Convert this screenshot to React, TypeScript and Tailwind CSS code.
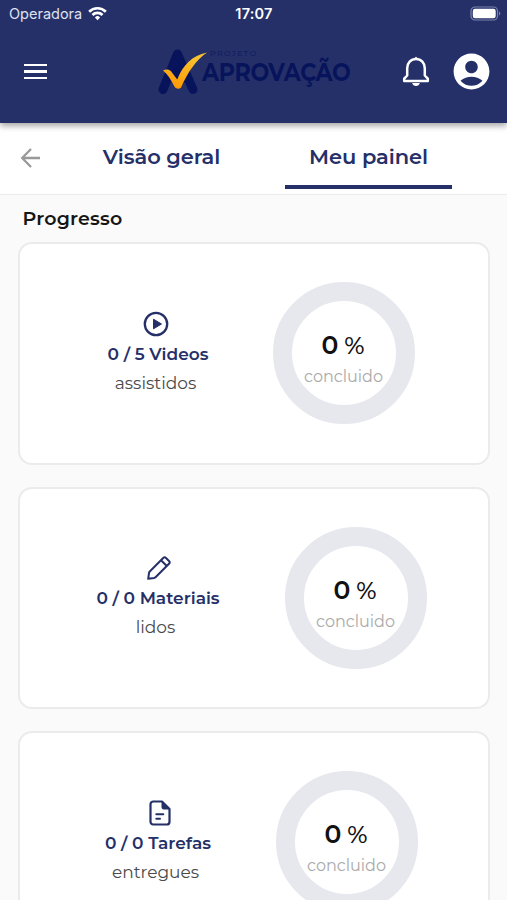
import { useState, type ReactNode } from "react";
import { MdAccountCircle } from "react-icons/md";

type ProgressItem = {
  id: string;
  icon: ReactNode;
  iconClass: string;
  title: string;
  subtitle: string;
  ringClass: string;
  percent: number;
};

const PlayIcon = () => (
  <svg viewBox="0 0 26 26" className="size-[26px]" fill="none">
    <circle cx="13" cy="13" r="11.2" stroke="currentColor" strokeWidth="2.3" />
    <path d="M10.5 8.2 18.5 13l-8 4.8Z" fill="currentColor" stroke="currentColor" strokeLinejoin="round" />
  </svg>
);

const PencilIcon = () => (
  <svg viewBox="0 0 26 26" className="size-[26px]" fill="none" stroke="currentColor" strokeWidth="2" strokeLinejoin="round">
    <path d="M2.2 23.8 3 18Q3.2 17 4 16.2L17.2 3Q18.6 1.6 20 3L23 6Q24.4 7.4 23 8.8L9.8 22Q9 22.8 8 23Z" />
    <path d="m15 5.2 5.8 5.8" />
  </svg>
);

const FileIcon = () => (
  <svg viewBox="0 0 22 26" className="h-[26px] w-[22px]" fill="none" stroke="currentColor" strokeWidth="2.2" strokeLinecap="round" strokeLinejoin="round">
    <path d="M4.3 1.5H13L20.5 9v12.7a2.8 2.8 0 0 1-2.8 2.8H4.3a2.8 2.8 0 0 1-2.8-2.8V4.3a2.8 2.8 0 0 1 2.8-2.8Z" />
    <path d="M13 1.8V7.5a1.5 1.5 0 0 0 1.5 1.5h6Z" fill="currentColor" strokeWidth="1" />
    <path d="M7.3 14.3h7M7.3 18.7H11" strokeWidth="2" />
  </svg>
);

const items: ProgressItem[] = [
  {
    id: "videos",
    icon: <PlayIcon />,
    iconClass: "",
    title: "0 / 5 Videos",
    subtitle: "assistidos",
    ringClass: "ml-[55px]",
    percent: 0,
  },
  {
    id: "materiais",
    icon: <PencilIcon />,
    iconClass: "pl-1.5",
    title: "0 / 0 Materiais",
    subtitle: "lidos",
    ringClass: "ml-[67px]",
    percent: 0,
  },
  {
    id: "tarefas",
    icon: <FileIcon />,
    iconClass: "pl-2",
    title: "0 / 0 Tarefas",
    subtitle: "entregues",
    ringClass: "ml-[58px]",
    percent: 0,
  },
];

const StatusBar = () => (
  <div className="grid h-7 grid-cols-3 items-center pl-[9px] pr-[6px] font-['Inter',sans-serif] text-[14.5px] text-white">
    <div className="flex items-center gap-[6px]">
      <span className="text-[#dfe2f0]">Operadora</span>
      <svg viewBox="0 0 20 15" className="-mt-[2px] h-[15px] w-[19px]" fill="none" stroke="currentColor" strokeWidth="2.8">
        <path d="M1.2 5.6a12.5 12.5 0 0 1 17.6 0" />
        <path d="M4.7 9.1a7.5 7.5 0 0 1 10.6 0" />
        <path d="m10 14.5-2.7-2.9a3.8 3.8 0 0 1 5.4 0Z" fill="currentColor" stroke="none" />
      </svg>
    </div>
    <span className="pr-[2px] text-center font-semibold tracking-[0.2px]">17:07</span>
    <svg viewBox="0 0 31 15" className="h-[15px] w-[31px] justify-self-end -mt-[1px]">
      <rect x="1" y="1" width="26.5" height="13" rx="4" fill="none" stroke="#7c83ab" strokeWidth="1.2" />
      <rect x="2.8" y="2.8" width="22.9" height="9.4" rx="2.2" fill="white" />
      <path d="M29 5.5c1.8.8 1.8 3.2 0 4Z" fill="#7c83ab" />
    </svg>
  </div>
);

const Logo = () => (
  <div className="flex h-12 w-[193px]">
    <svg viewBox="0 0 50 48" className="h-12 w-[50px] shrink-0">
      <defs>
        <linearGradient id="check" x1="0" y1="1" x2="0.3" y2="0">
          <stop offset="0" stopColor="#ff9500" />
          <stop offset="1" stopColor="#f8c330" />
        </linearGradient>
      </defs>
      <path d="M5 41.5 19.5 6 35 41.5" fill="none" stroke="#07145c" strokeWidth="9" strokeLinecap="round" strokeLinejoin="round" />
      <path d="M12 12h15l4 19-10 8-10-12Z" fill="#07145c" />
      <path d="M5 22.5c3-1.4 6-1.3 8 .7l6.2 8.2C25 17 34 7.7 49 4.5 38 12 30 24 23.5 38.5c-.8 2.8-5.5 3.1-7.1.1C13 32 10 26.5 5 22.5Z" fill="url(#check)" />
    </svg>
    <div className="-ml-[6px] text-[#07145c]">
      <div className="pl-[8px] text-[8px] font-medium leading-[10px] tracking-[1.2px] text-[#121e62]">PROJETO</div>
      <div className="origin-left scale-x-[0.89] whitespace-nowrap pt-[2px] text-[25px] font-bold leading-[25px] tracking-[-0.4px]">
        APROVAÇÃO
      </div>
    </div>
  </div>
);

const Header = () => (
  <header className="relative z-10 h-[123px] shrink-0 bg-[#253068] shadow-[0_3px_6px_rgba(0,0,0,0.35)]">
    <StatusBar />
    <div className="flex h-[87px] items-center pl-6 pr-[14px] text-white">
      <button aria-label="Menu" className="flex w-[23px] flex-col gap-1">
        <span className="h-[2.3px] bg-white" />
        <span className="h-[2.3px] bg-white" />
        <span className="h-[2.3px] bg-white" />
      </button>
      <div className="ml-[111px]">
        <Logo />
      </div>
      <button aria-label="Notificações" className="ml-[51px]">
        <svg viewBox="0 0 28 32" className="h-8 w-7" fill="none" stroke="currentColor" strokeWidth="2.5" strokeLinejoin="round">
          <path d="M5.2 19.5v-7.2C5.2 7 8.8 3 14 3s8.8 4 8.8 9.3v7.2l3 3.2v2.3H2.2v-2.3Z" />
          <path d="M10.2 27h7.6c-.4 1.8-1.9 3-3.8 3s-3.4-1.2-3.8-3Z" fill="currentColor" stroke="none" />
          <path d="M12 2.5 14 .8l2 1.7Z" fill="currentColor" stroke="none" />
        </svg>
      </button>
      <button aria-label="Perfil" className="ml-auto">
        <MdAccountCircle className="size-[43px]" />
      </button>
    </div>
  </header>
);

const ProgressCard = ({ item }: { item: ProgressItem }) => (
  <section className="flex h-[222.5px] shrink-0 items-center rounded-[14px] border-2 border-[#ebebed] bg-white pl-[74px]">
    <div className="flex w-[124px] shrink-0 flex-col items-center whitespace-nowrap pt-px">
      <div className={`flex h-[26px] text-[#253068] ${item.iconClass}`}>{item.icon}</div>
      <div className="mt-[3px] pl-[5px] text-[17px] font-semibold leading-7 text-[#253068]">{item.title}</div>
      <div className="mt-px text-[17px] leading-7 text-[#4a4a4a]">{item.subtitle}</div>
    </div>
    <div
      className={`flex size-[142px] shrink-0 flex-col items-center rounded-full border-[19.5px] border-[#e7e8ee] pt-[28px] ${item.ringClass}`}
    >
      <div className="pr-px text-[25px] font-semibold leading-8 text-[#111]">
        {item.percent} <span className="-ml-px text-[24px] font-medium">%</span>
      </div>
      <div className="text-[16px] leading-[30px] text-[#aaa]">concluido</div>
    </div>
  </section>
);

const App = () => {
  const [tab, setTab] = useState("painel");

  return (
    <div className="flex h-[900px] w-[507px] flex-col overflow-hidden bg-[#fafafb] font-['Montserrat','Inter',sans-serif]">
      <Header />
      <nav className="flex h-[72px] shrink-0 items-start border-b border-[#ebecee] bg-white pl-5 text-[#253068]">
        <button aria-label="Voltar" className="mt-6 text-[#999]">
          <svg viewBox="0 0 22 22" className="size-[22px]" fill="none" stroke="currentColor" strokeWidth="2.3">
            <path d="M20 11H2.5M11 2 2.2 11l8.8 9" />
          </svg>
        </button>
        <button
          onClick={() => setTab("geral")}
          className={`ml-9 h-[66px] w-[167px] border-b-4 pt-[5px] text-[21px] font-semibold tracking-[-0.1px] ${
            tab === "geral" ? "border-[#253068]" : "border-transparent"
          }`}
        >
          Visão geral
        </button>
        <button
          onClick={() => setTab("painel")}
          className={`ml-10 h-[66px] w-[167px] border-b-4 pt-[5px] text-[21px] font-semibold tracking-[-0.1px] ${
            tab === "painel" ? "border-[#253068]" : "border-transparent"
          }`}
        >
          Meu painel
        </button>
      </nav>
      <main className="flex flex-col px-[17.5px]">
        <h2 className="h-[47px] pl-[5px] pt-[10px] text-[19px] font-semibold leading-7 tracking-[0.2px] text-[#161616]">
          Progresso
        </h2>
        <div className="flex flex-col gap-[22px]">
          {items.map((item) => (
            <ProgressCard key={item.id} item={item} />
          ))}
        </div>
      </main>
    </div>
  );
};

export default App;
